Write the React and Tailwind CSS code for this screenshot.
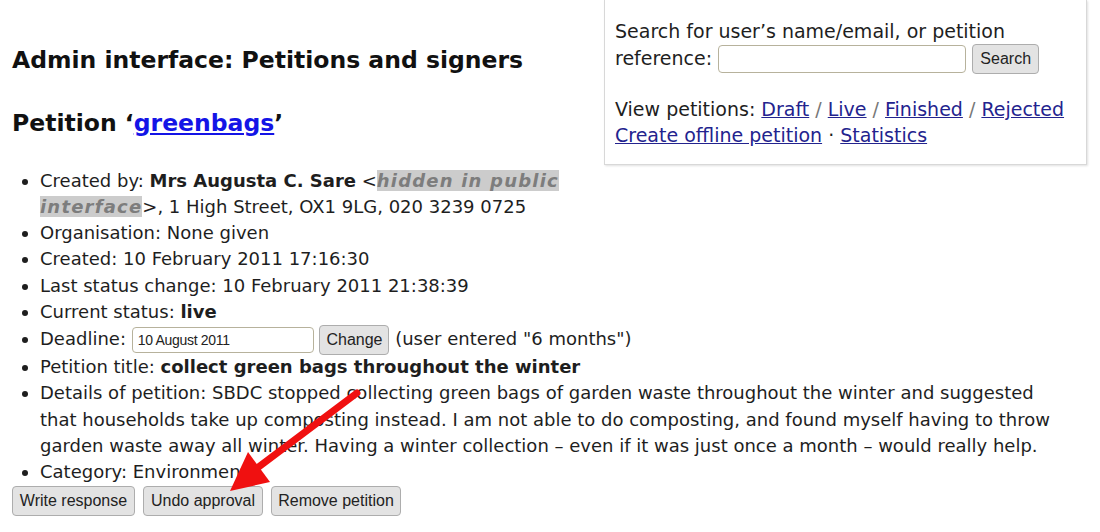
import React from "react";

const body = { fontFamily: '"DejaVu Sans", Verdana, sans-serif' };

function Btn({ children, className = "" }) {
  return (
    <button
      className={`h-[30px] px-[6px] rounded-[4px] border border-[#adadad] bg-[#e3e3e3] text-[#222] text-[16px] leading-none ${className}`}
      style={{ fontFamily: '"Liberation Sans", Arial, sans-serif' }}
    >
      {children}
    </button>
  );
}

export default function App() {
  return (
    <div className="relative w-[1100px] h-[532px] overflow-hidden bg-white text-[#1e1e1e]" style={body}>
      <div className="float-right mr-[13px] ml-[30px] mb-[22px] w-[483px] border border-t-0 border-[#d8d8d8] shadow-[1px_1px_2px_rgba(0,0,0,0.12)] pl-[10px] pr-[6px] pt-[18px] pb-[16px] text-[19px] leading-[26px]">
        <div>
          Search for user’s name/email, or petition
          <br />
          reference:{" "}
          <input className="align-middle w-[248px] h-[28px] border border-[#b7b29c] rounded-[4px] bg-white" />{" "}
          <Btn className="align-middle w-[67px]">Search</Btn>
        </div>
        <div className="mt-[22px]">
          View petitions: <a className="underline text-[#23238e]">Draft</a>{" "}
          <span className="text-[#777]">/</span>{" "}
          <a className="underline text-[#23238e]">Live</a>{" "}
          <span className="text-[#777]">/</span>{" "}
          <a className="underline text-[#23238e]">Finished</a>{" "}
          <span className="text-[#777]">/</span>{" "}
          <a className="underline text-[#23238e]">Rejected</a>
          <br />
          <a className="underline text-[#23238e]">Create offline petition</a> ·{" "}
          <a className="underline text-[#23238e]">Statistics</a>
        </div>
      </div>

      <div className="pl-[12px] pr-[35px]">
        <h2 className="pt-[46px] text-[23.5px] leading-[28px] font-bold text-[#111]">
          Admin interface: Petitions and signers
        </h2>
        <h2 className="mt-[35px] text-[23.5px] leading-[28px] font-bold text-[#111]">
          Petition ‘<a className="underline text-[#1414e6]">greenbags</a>’
        </h2>
        <ul className="mt-[31px] list-disc pl-[28px] text-[18px] leading-[26.3px]">
          <li className="leading-[25.5px]">
            Created by: <b>Mrs Augusta C. Sare</b> &lt;
            <i className="font-bold text-[#7d7d7d] bg-[#cccccc] tracking-[1.2px]">hidden in public interface</i>
            &gt;, 1 High Street, OX1 9LG, 020 3239 0725
          </li>
          <li className="mt-[1px]">Organisation: None given</li>
          <li>Created: 10 February 2011 17:16:30</li>
          <li>Last status change: 10 February 2011 21:38:39</li>
          <li>
            Current status: <b>live</b>
          </li>
          <li className="h-[29px]">
            Deadline:{" "}
            <input
              defaultValue="10 August 2011"
              className="align-middle w-[182px] h-[26px] px-[5px] border border-[#b7b29c] rounded-[4px] text-[14px] text-[#222]"
              style={{ fontFamily: '"Liberation Sans", Arial, sans-serif', letterSpacing: "-0.3px" }}
            />{" "}
            <Btn className="align-middle w-[70px]">Change</Btn> (user entered "6 months")
          </li>
          <li>
            Petition title: <b>collect green bags throughout the winter</b>
          </li>
          <li>
            Details of petition: SBDC stopped collecting green bags of garden waste throughout the winter and suggested that households take up composting instead. I am not able to do composting, and found myself having to throw garden waste away all winter. Having a winter collection – even if it was just once a month – would really help.
          </li>
          <li>Category: Environment</li>
        </ul>
        <div className="mt-0 flex gap-[8px]">
          <Btn className="w-[123px]">Write response</Btn>
          <Btn className="w-[120px]">Undo approval</Btn>
          <Btn className="w-[130px]">Remove petition</Btn>
        </div>
      </div>

      <svg className="absolute left-0 top-0 pointer-events-none" width="1100" height="532">
        <line x1="357" y1="393" x2="252" y2="472" stroke="#f01010" strokeWidth="7" strokeLinecap="round" />
        <polygon points="230,491 248,452 270,482" fill="#f01010" />
      </svg>
    </div>
  );
}
